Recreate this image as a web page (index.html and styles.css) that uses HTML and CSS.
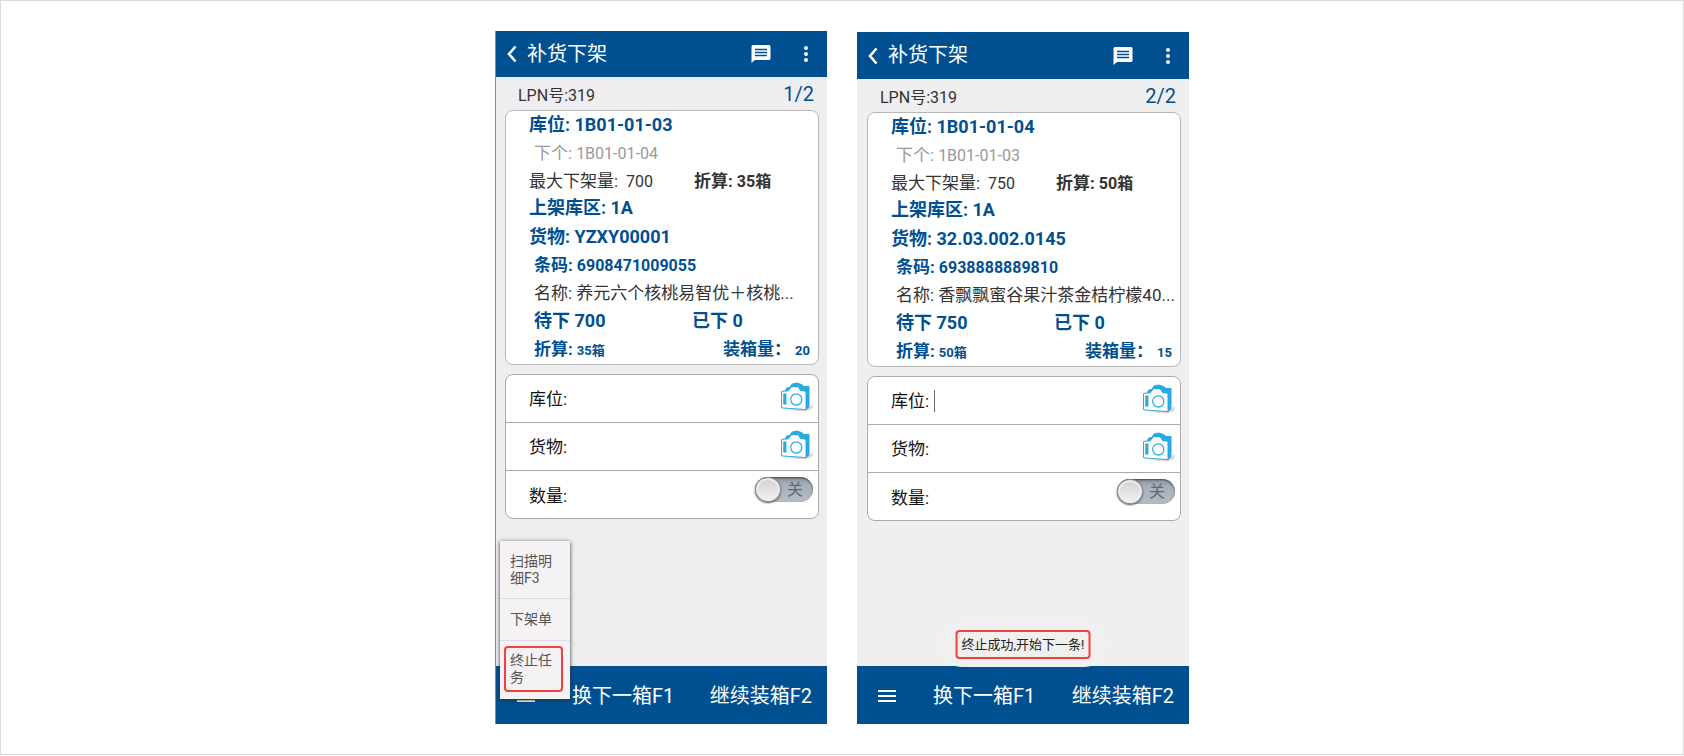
FILE: index.html
```html
<!DOCTYPE html>
<html lang="zh-CN">
<head>
<meta charset="utf-8">
<title>补货下架</title>
<link rel="stylesheet" href="styles.css">
</head>
<body>
<svg class="defs" width="0" height="0" aria-hidden="true">
  <symbol id="back" viewBox="0 0 10 18"><path d="M8.500 1.500 2 9l6.500 7.500" fill="none" stroke="#fff" stroke-width="2.600"/></symbol>
  <symbol id="chat" viewBox="0 0 20 18"><path d="M2 0h16a1.500 1.500 0 0 1 1.500 1.500v12A1.500 1.500 0 0 1 18 15H4l-3.500 3V1.500A1.500 1.500 0 0 1 2 0z" fill="#fff"/><path d="M4 4.500h12M4 7.500h12M4 10.500h12" stroke="#005091" stroke-width="1.500"/></symbol>
  <symbol id="more" viewBox="0 0 4 16"><g fill="#fff"><circle cx="2" cy="2" r="2"/><circle cx="2" cy="8" r="2"/><circle cx="2" cy="14" r="2"/></g></symbol>
  <symbol id="menu" viewBox="0 0 18 14"><path d="M0 2h18M0 7h18M0 12h18" stroke="#fff" stroke-width="1.800"/></symbol>
  <symbol id="camera" viewBox="0 0 33 30">
    <path d="M5 28 26 29.500l6.500-3V22l-4 4z" fill="#ccc" opacity=".8"/>
    <path d="M1 10.500Q1 9 2.500 8.800L5 8.500 6.500 5.500l3-.5 2.500-3.500L17 .5l4.500 1.500L24 4h5.500V25L26 28 2.500 26.500Q1 26.300 1 25z" fill="#29abe2"/>
    <path d="M2 10.600Q2 9.800 3 9.700L8.500 9.300 11.500 5.200h6.500L20.500 9l4 .4Q25.500 9.500 25.500 10.500V27L2.800 25.500Q2 25.400 2 24.600z" fill="#fff"/>
    <path d="M3.200 11.500h3.200v11.200L3.200 22.500z" fill="#29abe2"/>
    <circle cx="16.300" cy="17.500" r="5.600" fill="#fff" stroke="#29abe2" stroke-width="1.200"/>
  </symbol>
</svg>
<main class="page">

  <section class="phone phone--first">
    <header class="bar">
      <button class="icon-btn" aria-label="返回"><svg width="10" height="18"><use href="#back"/></svg></button>
      <h1 class="bar__title">补货下架</h1>
      <button class="icon-btn" aria-label="消息"><svg width="20" height="18"><use href="#chat"/></svg></button>
      <button class="icon-btn icon-btn--more" aria-label="更多"><svg width="4" height="16"><use href="#more"/></svg></button>
    </header>
    <div class="body">
      <div class="summary"><span>LPN号:319</span><span class="summary__count">1/2</span></div>
      <div class="card">
        <div class="row row--key">库位: 1B01-01-03</div>
        <div class="row row--sub row--muted"><span class="zh">下个:</span> 1B01-01-04</div>
        <div class="row row--max"><span class="half"><span class="zh">最大下架量:</span>&nbsp; 700</span><b><span class="zh">折算:</span> 35箱</b></div>
        <div class="row row--key">上架库区: 1A</div>
        <div class="row row--key row--tall">货物: YZXY00001</div>
        <div class="row row--sub row--code"><span class="zh">条码:</span> 6908471009055</div>
        <div class="row row--sub row--name">名称: 养元六个核桃易智优＋核桃...</div>
        <div class="row row--sub row--key"><span class="half">待下 700</span><span>已下 0</span></div>
        <div class="row row--sub row--code row--ends"><span><span class="zh">折算:</span> <small>35箱</small></span><span><span class="zh">装箱量：</span> <small>20</small></span></div>
      </div>
      <form class="form">
        <div class="field"><label for="loc1">库位:</label><input class="field__input" id="loc1" type="text"><button type="button" class="icon-btn icon-btn--scan" aria-label="扫描库位"><svg width="33" height="30"><use href="#camera"/></svg></button></div>
        <div class="field"><label for="item1">货物:</label><input class="field__input" id="item1" type="text"><button type="button" class="icon-btn icon-btn--scan" aria-label="扫描货物"><svg width="33" height="30"><use href="#camera"/></svg></button></div>
        <div class="field field--qty"><label for="qty1">数量:</label><input class="field__input" id="qty1" type="text"><label class="switch"><input class="switch__knob" type="checkbox">关</label></div>
      </form>
    </div>
    <footer class="actions">
      <button class="icon-btn" aria-label="菜单"><svg width="18" height="14"><use href="#menu"/></svg></button>
      <button class="actions__btn">换下一箱F1</button>
      <button class="actions__btn actions__btn--last">继续装箱F2</button>
    </footer>
    <div class="popup">
      <button class="popup__item popup__item--two">扫描明细F3</button>
      <button class="popup__item">下架单</button>
      <div class="popup__last"><button class="popup__marked">终止任务</button></div>
    </div>
  </section>

  <section class="phone phone--second">
    <header class="bar">
      <button class="icon-btn" aria-label="返回"><svg width="10" height="18"><use href="#back"/></svg></button>
      <h1 class="bar__title">补货下架</h1>
      <button class="icon-btn" aria-label="消息"><svg width="20" height="18"><use href="#chat"/></svg></button>
      <button class="icon-btn icon-btn--more" aria-label="更多"><svg width="4" height="16"><use href="#more"/></svg></button>
    </header>
    <div class="body">
      <div class="summary"><span>LPN号:319</span><span class="summary__count">2/2</span></div>
      <div class="card">
        <div class="row row--key">库位: 1B01-01-04</div>
        <div class="row row--sub row--muted"><span class="zh">下个:</span> 1B01-01-03</div>
        <div class="row row--max"><span class="half"><span class="zh">最大下架量:</span>&nbsp; 750</span><b><span class="zh">折算:</span> 50箱</b></div>
        <div class="row row--key">上架库区: 1A</div>
        <div class="row row--key row--tall">货物: 32.03.002.0145</div>
        <div class="row row--sub row--code"><span class="zh">条码:</span> 6938888889810</div>
        <div class="row row--sub row--name">名称: 香飘飘蜜谷果汁茶金桔柠檬40...</div>
        <div class="row row--sub row--key"><span class="half">待下 750</span><span>已下 0</span></div>
        <div class="row row--sub row--code row--ends"><span><span class="zh">折算:</span> <small>50箱</small></span><span><span class="zh">装箱量：</span> <small>15</small></span></div>
      </div>
      <form class="form">
        <div class="field"><label for="loc2">库位:</label><span class="caret"></span><input class="field__input" id="loc2" type="text"><button type="button" class="icon-btn icon-btn--scan" aria-label="扫描库位"><svg width="33" height="30"><use href="#camera"/></svg></button></div>
        <div class="field"><label for="item2">货物:</label><input class="field__input" id="item2" type="text"><button type="button" class="icon-btn icon-btn--scan" aria-label="扫描货物"><svg width="33" height="30"><use href="#camera"/></svg></button></div>
        <div class="field field--qty"><label for="qty2">数量:</label><input class="field__input" id="qty2" type="text"><label class="switch"><input class="switch__knob" type="checkbox">关</label></div>
      </form>
    </div>
    <footer class="actions">
      <button class="icon-btn" aria-label="菜单"><svg width="18" height="14"><use href="#menu"/></svg></button>
      <button class="actions__btn">换下一箱F1</button>
      <button class="actions__btn actions__btn--last">继续装箱F2</button>
    </footer>
    <div class="toast" role="status"><span class="toast__text">终止成功,开始下一条!</span></div>
  </section>

</main>
</body>
</html>
```

FILE: styles.css
```css
* { box-sizing: border-box; }

body {
  margin: 0;
  background: #fff;
  color: #333;
  font: 16px/28px Roboto, "Noto Sans CJK SC", sans-serif;
}

button, input { font: inherit; color: inherit; }

button {
  margin: 0;
  padding: 0;
  border: 0;
  background: none;
  text-align: left;
}

.defs { position: absolute; }

.page {
  display: flex;
  justify-content: center;
  gap: 30px;
  min-height: calc(100vh - 1px);
  padding: 30px 16px;
  border: 1px solid #dadada;
}

.phone {
  position: relative;
  display: flex;
  flex-direction: column;
  flex: 0 1 332px;
  min-width: 0;
}

.phone--first { background: #f0edf1; border-left: 1px solid #8b8b90; }
.phone--second { background: #efefef; margin-top: 1px; }

/* top bar */
.bar {
  display: flex;
  align-items: center;
  padding: 0 19px 0 11px;
  background: #005091;
  color: #fff;
}

.bar__title {
  flex: 1;
  margin: 0 0 0 10px;
  font-size: 20px;
  font-weight: 400;
  line-height: 46px;
}

.phone--second .bar__title { line-height: 47px; }

.icon-btn { display: flex; flex: none; }
.icon-btn--more { margin-left: 33px; }
.icon-btn--scan { padding-bottom: 3px; }

/* task details */
.body {
  flex: 1;
  padding: 0 8px 0 10px;
}

.phone--first .body { padding-left: 9px; }

.summary {
  display: flex;
  justify-content: space-between;
  padding: 4px 5px 0 13px;
  line-height: 29px;
}

.summary__count {
  color: #005091;
  font-size: 20px;
  line-height: 27px;
}

.card {
  padding-bottom: 1px;
  border: 1px solid #b8b8b8;
  border-radius: 8px;
  background: #fff;
}

.row {
  display: flex;
  align-items: baseline;
  gap: 4px;
  height: 28px;
  padding: 0 8px 0 23px;
  white-space: nowrap;
}

.row--sub { padding-left: 28px; }
.row--max { height: 27px; }
.row--tall { height: 29px; line-height: 30px; }
.row--muted { color: #999; }
.row--name, .zh { font-size: 17px; }

.row--key {
  color: #005091;
  font-size: 18px;
  font-weight: 700;
}

.row--code { color: #005091; font-weight: 700; }
.row--ends { justify-content: space-between; }
.row small { font-size: 13px; }

.half { width: 161px; }
.row--sub .half { width: 154px; }

/* scan form */
.form {
  margin-top: 9px;
  border: 1px solid #aaa;
  border-radius: 8px;
  background: #fff;
}

.field {
  display: flex;
  align-items: center;
  height: 47px;
  padding: 0 5px 0 23px;
  color: #111;
  font-size: 17px;
}

.field + .field { height: 48px; border-top: 1px solid #aaa; }

.field__input {
  flex: 1;
  width: 0;
  min-width: 0;
  border: 0;
  outline: 0;
  background: none;
}

.caret {
  width: 1px;
  height: 22px;
  margin-left: 5px;
  background: #666;
}

.field--qty { padding-top: 2px; }

.switch {
  display: flex;
  align-items: center;
  align-self: flex-start;
  gap: 6px;
  width: 58px;
  height: 25px;
  margin-top: 4px;
  border-radius: 13px;
  background: linear-gradient(#8b929c, #a7afba 30%, #b4bcc6);
  box-shadow: inset 0 1px 2px #40464e;
  color: #5c6a7b;
  font-size: 16px;
}

.switch__knob {
  appearance: none;
  width: 26px;
  height: 25px;
  margin: 0;
  border: 1px solid #8a8a8e;
  border-radius: 50%;
  background: linear-gradient(#d2d2d4, #f2f2f2);
  box-shadow: inset 0 0 0 2px #ececee, 0 1px 2px #55555a;
}

/* bottom bar */
.actions {
  display: flex;
  align-items: center;
  padding: 1px 15px 0 21px;
  background: #005091;
  color: #fff;
  font-size: 20px;
  line-height: 57px;
}

.actions__btn { margin-left: 37px; padding-top: 2px; line-height: 55px; white-space: nowrap; }
.actions__btn--last { margin-left: auto; }

/* popup menu over the bottom bar */
.popup {
  position: absolute;
  left: 4px;
  bottom: 25px;
  display: flex;
  flex-direction: column;
  width: 70px;
  background: #f4f2f5;
  box-shadow: 0 1px 4px #333;
  color: #555;
  font-size: 14px;
  line-height: 17px;
}

.popup__item { padding: 12px 10px; }
.popup__item--two { padding: 12px 10px 11px; }
.popup__item + .popup__item,
.popup__last { border-top: 1px solid #dedce0; }

.popup__last { display: flex; padding: 5px 7px 7px 4px; }

.popup__marked {
  flex: 1;
  padding: 4px;
  border: 2px solid #f2403a;
  border-radius: 4px;
}

/* toast */
.toast {
  position: absolute;
  left: 50%;
  bottom: 57px;
  padding: 8px 16px;
  border-radius: 22px;
  background: #f0f0f0;
  transform: translateX(-50%);
  white-space: nowrap;
}

.toast__text {
  display: block;
  padding: 0 4px;
  border: 2px solid #f2403a;
  border-radius: 4px;
  color: #222;
  font-size: 13px;
  line-height: 25px;
}
```
